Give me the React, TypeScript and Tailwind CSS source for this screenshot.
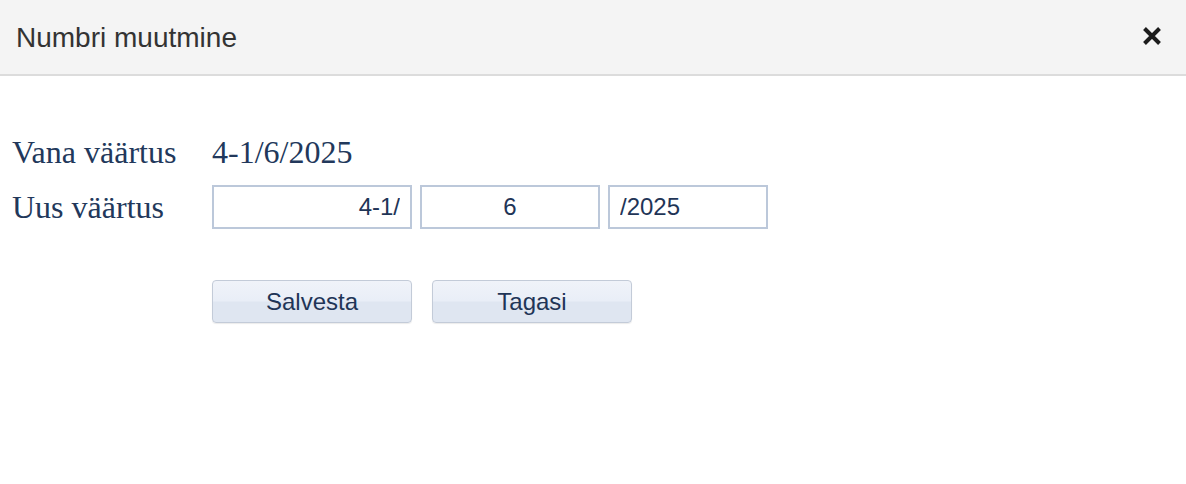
import React from 'react';

const serif = { fontFamily: '"Liberation Serif", "Times New Roman", serif' };
const sans = { fontFamily: '"Liberation Sans", Arial, sans-serif' };

const CloseIcon: React.FC = () => (
  <svg width="20" height="20" viewBox="0 0 20 20" className="text-[#1c1c1c]">
    <path d="M2.5 2.5 L17.5 17.5 M17.5 2.5 L2.5 17.5" stroke="currentColor" strokeWidth="4" strokeLinecap="butt" />
  </svg>
);

const Field: React.FC<{ value: string; width: string; align: string }> = ({ value, width, align }) => (
  <input
    readOnly
    value={value}
    style={sans}
    className={`${width} ${align} h-[44px] border-2 border-[#bcc8da] bg-white px-[10px] text-[24px] text-[#1f3557] outline-none`}
  />
);

const Button: React.FC<{ label: string }> = ({ label }) => (
  <button
    style={sans}
    className="w-[200px] h-[43px] rounded-[4px] border border-[#c3cbd8] bg-[linear-gradient(#f0f3f9_0%,#e9eef7_48%,#dfe6f1_52%,#dfe6f1_100%)] text-[24px] text-[#1f3557] shadow-[0_1px_1px_rgba(0,0,0,0.08)]"
  >
    {label}
  </button>
);

export default function App() {
  return (
    <div className="w-[1186px] h-[484px] bg-white overflow-hidden">
      <div className="h-[76px] bg-[#f4f4f4] border-b-2 border-[#dcdcdc] flex items-center justify-between pl-[16px] pr-[24px]">
        <h1 style={sans} className="text-[28px] text-[#333333] pt-[2px]">Numbri muutmine</h1>
        <button className="mt-[-2px]" aria-label="Sulge">
          <CloseIcon />
        </button>
      </div>

      <div className="pl-[12px] pt-[56px]">
        <div className="flex items-center h-[40px]" style={serif}>
          <span className="w-[200px] text-[32px] text-[#22385b]">Vana väärtus</span>
          <span className="text-[32px] text-[#22385b]">4-1/6/2025</span>
        </div>
        <div className="flex items-center mt-[11px]">
          <span style={serif} className="w-[200px] text-[32px] text-[#22385b]">Uus väärtus</span>
          <div className="flex gap-[8px]">
            <Field value="4-1/" width="w-[200px]" align="text-right" />
            <Field value="6" width="w-[180px]" align="text-center" />
            <Field value="/2025" width="w-[160px]" align="text-left" />
          </div>
        </div>
        <div className="flex gap-[20px] ml-[200px] mt-[49px]">
          <Button label="Salvesta" />
          <Button label="Tagasi" />
        </div>
      </div>
    </div>
  );
}
